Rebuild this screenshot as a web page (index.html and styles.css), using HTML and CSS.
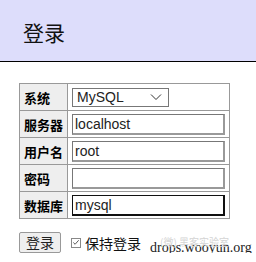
FILE: index.html
```html
<!DOCTYPE html>
<html>
<head>
    <title>登录</title>
    <link rel="stylesheet" href="styles.css">
</head>
<body>
    <div class="header">
        <h1>登录</h1>
    </div>

    <form class="login-form">
        <table class="login-table">
            <tr>
                <th>系统</th>
                <td>
                    <div class="select-box">
                        <span>MySQL</span>
                        <svg width="12" height="8" viewBox="0 0 12 8"><path d="M1 1.5 L6 6.5 L11 1.5" fill="none" stroke="#333" stroke-width="1"/></svg>
                    </div>
                </td>
            </tr>
            <tr>
                <th>服务器</th>
                <td><input type="text" value="localhost" /></td>
            </tr>
            <tr>
                <th>用户名</th>
                <td><input type="text" value="root" /></td>
            </tr>
            <tr>
                <th>密码</th>
                <td><input type="password" /></td>
            </tr>
            <tr>
                <th>数据库</th>
                <td><input type="text" value="mysql" class="active" /></td>
            </tr>
        </table>

        <div class="actions">
            <button type="button" class="btn">登录</button>
            <label class="remember">
                <span class="check"><svg width="9" height="9" viewBox="0 0 9 9"><path d="M1.5 4.5 L3.5 6.5 L7.5 2" fill="none" stroke="#444" stroke-width="1"/></svg></span>
                保持登录
            </label>
            <span class="watermark">
                <span class="wm-faint">(微) 黑客实验室</span>
                drops.wooyun.org
            </span>
        </div>
    </form>
</body>
</html>
```

FILE: styles.css
```css
* {
    margin: 0;
    padding: 0;
    box-sizing: border-box;
}

body {
    background: #fff;
    font-family: "Liberation Sans", Arial, "Noto Sans CJK SC", sans-serif;
    color: #000;
}

.header {
    height: 62px;
    background: #ddddfb;
    border-bottom: 1px solid #000;
    padding: 19px 0 0 23px;
}

.header h1 {
    font-family: "Noto Sans CJK SC", sans-serif;
    font-weight: normal;
    font-size: 21px;
    line-height: 26px;
    color: #111;
}

.login-form {
    padding: 21px 0 0 19px;
}

.login-table {
    border-collapse: collapse;
    width: 211px;
}

.login-table th,
.login-table td {
    border: 1px solid #999;
    height: 27px;
}

.login-table th {
    width: 48px;
    background: #eee;
    text-align: left;
    padding: 0 3px 0 4px;
    font-family: "Noto Sans CJK SC", sans-serif;
    font-size: 13px;
    font-weight: bold;
    white-space: nowrap;
}

.login-table td {
    padding: 0 4px;
}

.login-table input {
    display: block;
    width: 153px;
    height: 21px;
    border-width: 1px 2px 2px 1px;
    border-style: solid;
    border-color: #777 #999 #999 #777;
    padding: 0 2px;
    font-family: "Liberation Sans", Arial, sans-serif;
    font-size: 14px;
    color: #222;
    background: #fff;
    outline: none;
}

.login-table input.active {
    border-color: #111;
}

.select-box {
    width: 97px;
    height: 19px;
    border: 1px solid #777;
    display: flex;
    align-items: center;
    justify-content: space-between;
    padding: 0 6px 0 4px;
    font-size: 14px;
    color: #222;
    background: #fff;
}

.actions {
    display: flex;
    align-items: center;
    margin-top: 13px;
    position: relative;
}

.btn {
    width: 42px;
    height: 21px;
    background: #efefef;
    border: 1px solid #999;
    border-radius: 2px;
    font-family: "Noto Sans CJK SC", sans-serif;
    font-size: 14px;
    color: #222;
    line-height: 19px;
}

.remember {
    display: flex;
    align-items: center;
    margin-left: 10px;
    font-family: "Noto Sans CJK SC", sans-serif;
    font-size: 14px;
    color: #111;
    gap: 4px;
}

.check {
    width: 10px;
    height: 10px;
    border: 1px solid #888;
    display: flex;
    align-items: center;
    justify-content: center;
    background: #fff;
}

.watermark {
    position: absolute;
    left: 131px;
    top: 8px;
    font-family: "Liberation Serif", "Times New Roman", serif;
    font-size: 14px;
    line-height: 16px;
    color: #222;
    white-space: nowrap;
}

.wm-faint {
    position: absolute;
    left: 10px;
    top: -4px;
    font-family: "Noto Sans CJK SC", sans-serif;
    font-size: 10px;
    line-height: 12px;
    color: #d4d4d4;
}
```
